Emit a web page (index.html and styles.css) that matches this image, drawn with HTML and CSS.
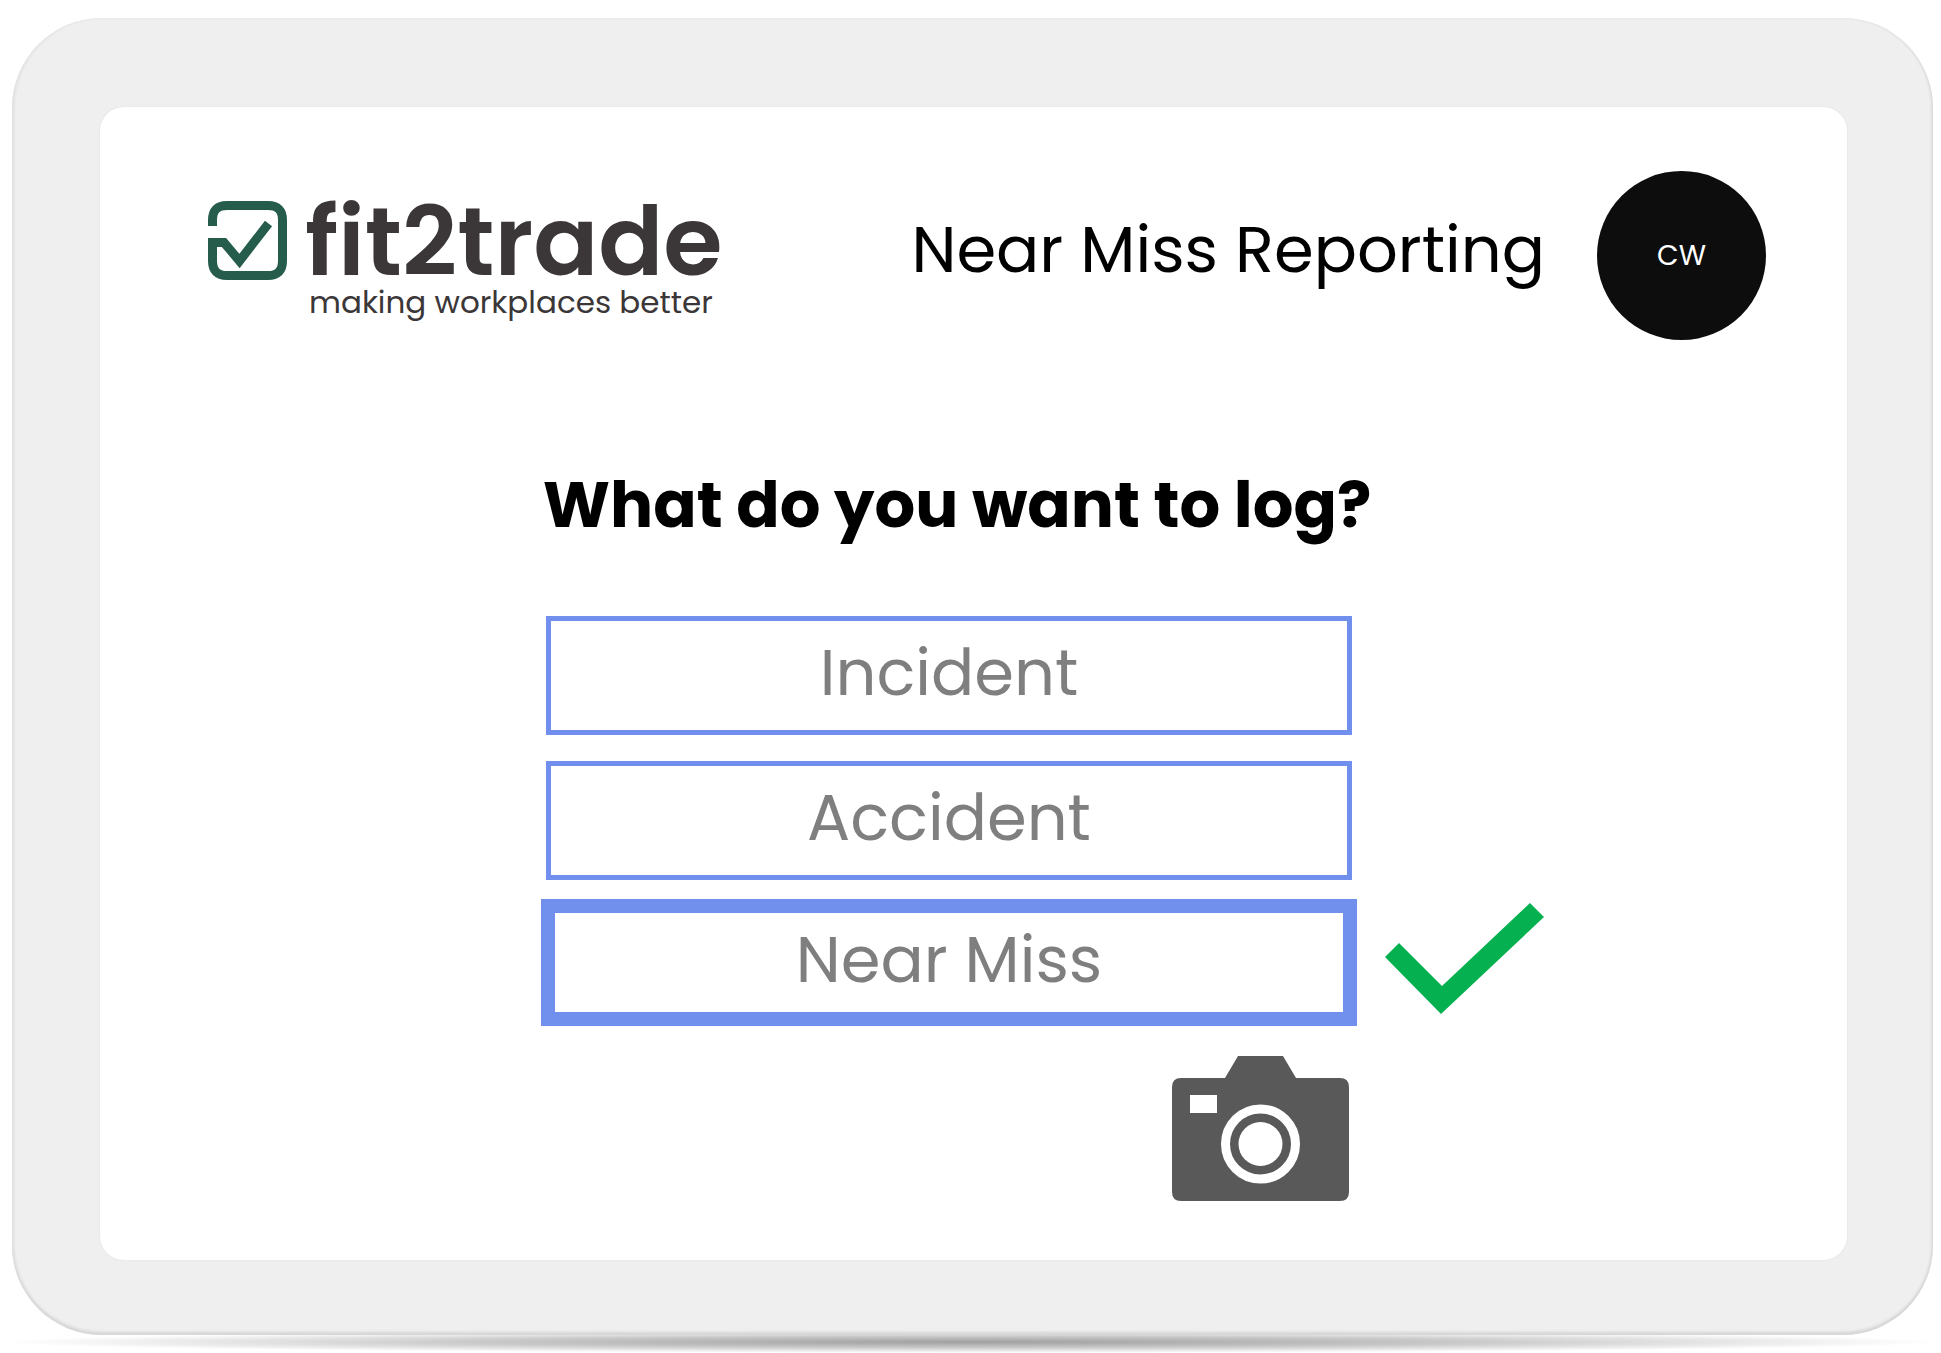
FILE: index.html
```html
<!DOCTYPE html>
<html lang="en">
  <head>
    <meta charset="UTF-8" />
    <meta name="viewport" content="width=device-width, initial-scale=1.0" />
    <title>Near Miss Reporting</title>
    <link rel="stylesheet" href="styles.css">
  </head>
  <body>
    <div class="tablet">
      <div class="screen">
        <header class="header">
          <div class="logo">
            <svg class="logo-icon" viewBox="0 0 79 79" aria-hidden="true">
              <path d="M4.500 25V19Q4.500 4.500 19 4.500H60Q74.500 4.500 74.500 19V60Q74.500 74.500 60 74.500H19Q4.500 74.500 4.500 60V41.500H16L31.500 60L60.500 22.500" fill="none" stroke="#265c4b" stroke-width="9" />
            </svg>
            <div class="logo-name">fit2trade</div>
            <div class="logo-tagline">making workplaces better</div>
          </div>
          <h1 class="page-title">Near Miss Reporting</h1>
          <div class="avatar">CW</div>
        </header>

        <main class="log-form">
          <h2 class="question">What do you want to log?</h2>
          <button type="button" class="option">Incident</button>
          <button type="button" class="option">Accident</button>
          <button type="button" class="option selected" aria-pressed="true">Near Miss</button>
          <svg class="tick" viewBox="0 0 159 111" aria-hidden="true">
            <path d="M0 54L14 40L57 83L145 0L159 14L56 111Z" fill="#04b050" />
          </svg>
          <button type="button" class="camera" aria-label="Take a photo">
            <svg viewBox="0 0 177 145" aria-hidden="true">
              <path d="M9 22H53L66 0H111L124 22H168Q177 22 177 31V136Q177 145 168 145H9Q0 145 0 136V31Q0 22 9 22Z" fill="#595959" />
              <rect x="18" y="39" width="27" height="18" fill="#fff" />
              <circle cx="88.500" cy="88" r="35" fill="none" stroke="#fff" stroke-width="9" />
              <circle cx="88.500" cy="88" r="22" fill="#fff" />
            </svg>
          </button>
        </main>
      </div>
    </div>
    <div class="tablet-shadow"></div>
  </body>
</html>
```
FILE: styles.css
```css
* {
  box-sizing: border-box;
}

body {
  font-family: Poppins, Inter, sans-serif;
  background-color: #fff;
  color: #000;
  display: flex;
  flex-direction: column;
  min-height: 100vh;
  margin: 0;
  padding-top: 18px;
}

/* Tablet frame */
.tablet {
  flex: 1;
  display: flex;
  margin: 0 8px 0 12px;
  padding: 89px 86px 75px 88px;
  background-color: #efefef;
  border-radius: 90px;
  box-shadow: inset 0 -3px 3px #d6d6d6, inset 3px 0 2px #e6e6e6,
    inset -2px 0 2px #e0e0e0;
}

.tablet-shadow {
  height: 22px;
  margin-top: -4px;
  background: radial-gradient(closest-side, #a0a0a0, #c8c8c8 50%, #fff);
  clip-path: inset(4px 0 0 0);
}

.screen {
  flex: 1;
  background-color: #fff;
  border-radius: 24px;
  box-shadow: 0 0 2px #ddd;
}

/* Header */
.header {
  display: flex;
  align-items: center;
  padding: 64px 81px 0 108px;
}

.logo {
  display: grid;
  grid-template-columns: 79px auto;
  column-gap: 18px;
  align-items: center;
  padding-top: 6px;
  color: #3b3738;
}

.logo-icon {
  width: 79px;
  height: 79px;
}

.logo-name {
  padding-top: 2px;
  font-size: 96px;
  font-weight: 600;
  line-height: 84px;
}

.logo-tagline {
  grid-column: 2;
  padding-left: 4px;
  font-size: 31px;
  line-height: 36px;
}

.page-title {
  margin: 0 52px 12px auto;
  font-size: 64px;
  font-weight: 400;
  line-height: 80px;
}

.avatar {
  display: flex;
  justify-content: center;
  align-items: center;
  width: 169px;
  height: 169px;
  border-radius: 50%;
  background-color: #0d0d0d;
  color: #fff;
  font-size: 28px;
}

/* Log form */
.log-form {
  display: grid;
  grid-template-columns: 817fr 462fr;
  row-gap: 12px;
  column-gap: 28px;
  align-items: center;
  padding: 125px 0 48px calc(25% + 4px);
}

.question {
  grid-column: 1 / -1;
  margin: 0 0 52px 2px;
  font-size: 64px;
  font-weight: 700;
  line-height: 80px;
}

.option {
  grid-column: 1;
  height: 119px;
  margin: 7px 5px;
  padding: 0 0 5px;
  border: 5px solid #7190ee;
  background-color: #fff;
  color: #7f7f7f;
  font-family: inherit;
  font-size: 64px;
  line-height: 80px;
  cursor: pointer;
}

.option.selected {
  height: 127px;
  margin: 0;
  border-width: 14px;
}

.tick {
  width: 159px;
  height: 111px;
  margin-bottom: 8px;
}

.camera {
  justify-self: end;
  width: 177px;
  height: 145px;
  margin: 18px 8px 0 0;
  padding: 0;
  border: none;
  background: none;
  cursor: pointer;
}

.camera svg {
  display: block;
}
```
